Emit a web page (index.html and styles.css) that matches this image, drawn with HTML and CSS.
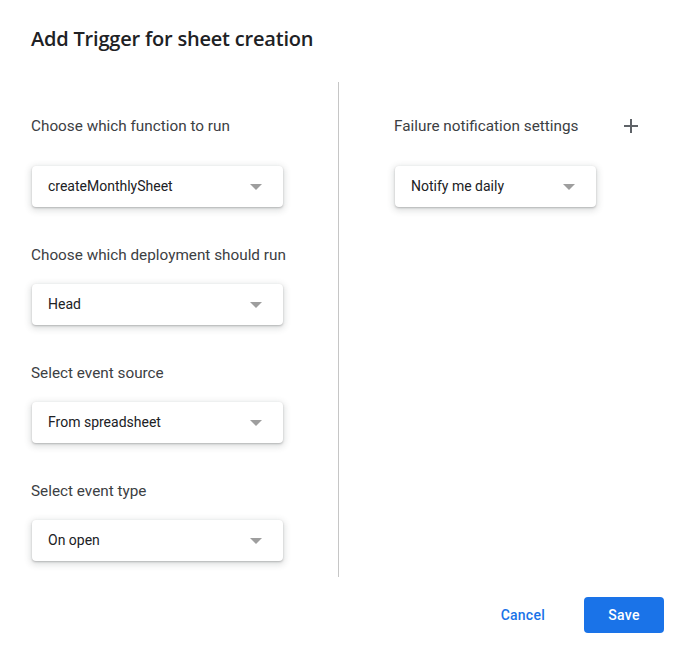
FILE: index.html
```html
<!DOCTYPE html>
<html>
<head>
<meta charset="utf-8">
<link rel="stylesheet" href="styles.css">
</head>
<body>
<div class="dialog">
  <h1 class="title">Add Trigger for sheet creation</h1>
  <div class="columns">
    <div class="col col-left">
      <div class="field field-first">
        <div class="label">Choose which function to run</div>
        <div class="select select-wide"><span>createMonthlySheet</span><i class="arrow"></i></div>
      </div>
      <div class="field">
        <div class="label">Choose which deployment should run</div>
        <div class="select select-wide"><span>Head</span><i class="arrow"></i></div>
      </div>
      <div class="field">
        <div class="label">Select event source</div>
        <div class="select select-wide"><span>From spreadsheet</span><i class="arrow"></i></div>
      </div>
      <div class="field field-last">
        <div class="label">Select event type</div>
        <div class="select select-wide"><span>On open</span><i class="arrow"></i></div>
      </div>
    </div>
    <div class="col col-right">
      <div class="field field-first">
        <div class="label label-row">
          <span>Failure notification settings</span>
          <svg class="plus" width="14" height="14" viewBox="0 0 14 14"><path d="M7 0v14M0 7h14" stroke="#5f6368" stroke-width="2"/></svg>
        </div>
        <div class="select select-narrow"><span>Notify me daily</span><i class="arrow"></i></div>
      </div>
    </div>
  </div>
  <div class="footer">
    <button class="btn btn-cancel">Cancel</button>
    <button class="btn btn-save">Save</button>
  </div>
</div>
</body>
</html>
```
FILE: styles.css
```css
* { box-sizing: border-box; }
html, body { margin: 0; padding: 0; background: #fff; }
body { font-family: Roboto, "Noto Sans", sans-serif; color: #202124; }

.dialog { width: 694px; height: 658px; padding: 0 30px 0 31px; }

.title {
  margin: 0;
  padding-top: 26px;
  height: 82px;
  font-family: "Open Sans", Roboto, sans-serif;
  font-size: 20px;
  font-weight: 600;
  line-height: 26px;
  color: #202124;
  letter-spacing: -0.2px;
}

.columns { display: flex; }
.col { padding-top: 34px; }
.col-left { width: 308px; border-right: 1px solid #c6c6c6; padding-bottom: 16px; }
.col-right { padding-left: 55px; flex: 1; }

.field { display: flex; flex-direction: column; margin-bottom: 38px; }
.field-last { margin-bottom: 0; }
.label {
  font-size: 15.3px;
  line-height: 20px;
  color: #3c4043;
  margin-bottom: 19px;
}
.field-first .label { margin-bottom: 30px; }
.label-row { display: flex; align-items: center; justify-content: space-between; width: 244px; }
.plus { display: block; margin-right: 0; }

.select {
  position: relative;
  height: 41px;
  display: flex;
  align-items: center;
  padding-left: 16px;
  padding-bottom: 1px;
  font-size: 14px;
  color: #202124;
  background: #fff;
  border-radius: 4px;
  box-shadow: 0 1px 2px rgba(60,64,67,.3), 0 2px 6px 2px rgba(60,64,67,.15);
}
.select-wide { width: 251px; margin-left: 1px; }
.select-narrow { width: 201px; margin-left: 1px; }
.arrow {
  position: absolute;
  right: 21px;
  top: 18px;
  width: 0; height: 0;
  border-left: 6px solid transparent;
  border-right: 6px solid transparent;
  border-top: 6px solid #9e9e9e;
}

.footer { display: flex; justify-content: flex-end; align-items: center; margin-top: 20px; }
.btn {
  font-family: Roboto, "Noto Sans", sans-serif;
  font-size: 14px;
  font-weight: 500;
  height: 36px;
  border: none;
  border-radius: 4px;
  cursor: pointer;
  letter-spacing: .25px;
}
.btn-cancel { background: transparent; color: #1a73e8; padding: 0 23px; margin-right: 16px; }
.btn-save { background: #1a73e8; color: #fff; width: 80px; }
```
